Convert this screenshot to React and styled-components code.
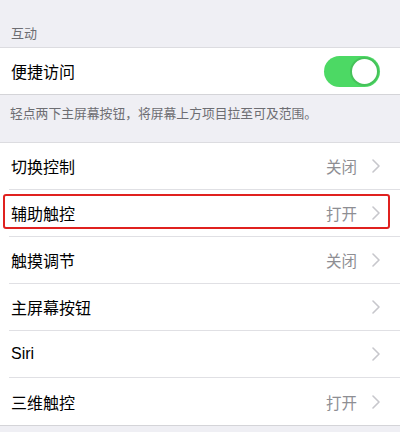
import React from 'react'
import styled, { createGlobalStyle } from 'styled-components'

const GlobalStyle = createGlobalStyle`
  body {
    margin: 0;
    background: #efeff4;
    font-family: "Noto Sans CJK SC", "Noto Sans", sans-serif;
  }
`

const Page = styled.div`
  width: 400px;
  height: 432px;
  overflow: hidden;
  background: #efeff4;
`

const GroupHeader = styled.div`
  height: 47px;
  box-sizing: border-box;
  padding: 0 0 5px 11px;
  display: flex;
  align-items: flex-end;
  font-size: 13px;
  color: #6d6d72;
`

const Group = styled.div`
  background: #fff;
  border-top: 1px solid #dcdce0;
  border-bottom: 1px solid #d4d4d8;
`

const Footer = styled.div`
  height: 47px;
  box-sizing: border-box;
  padding: 8px 0 0 10px;
  font-size: 12.8px;
  color: #6d6d72;
`

const Row = styled.div`
  position: relative;
  padding-left: 9px;
`

const RowInner = styled.div`
  height: ${p => p.$h || 46}px;
  box-sizing: border-box;
  display: flex;
  align-items: center;
  padding: 0 20px 0 2px;
  border-bottom: ${p => (p.$last ? 'none' : '1px solid #e0e0e4')};
`

const Label = styled.span`
  flex: 1;
  font-size: 16px;
  color: #000;
  font-family: ${p => (p.$latin ? '"Liberation Sans", Arial, sans-serif' : 'inherit')};
`

const Value = styled.span`
  font-size: 15.5px;
  color: #8e8e93;
  margin-right: 15px;
`

const Toggle = styled.div`
  width: 56px;
  height: 31px;
  border-radius: 16px;
  background: #4cd964;
  position: relative;
  &::after {
    content: '';
    position: absolute;
    top: 1px;
    right: 1px;
    width: 25px;
    height: 25px;
    border-radius: 50%;
    background: #fff;
    border: 2px solid #46c25a;
  }
`

const Highlight = styled.div`
  position: absolute;
  left: 3px;
  right: 10px;
  top: 4px;
  height: 35px;
  border: 2px solid #e0211f;
  border-radius: 3px;
  box-sizing: border-box;
  pointer-events: none;
`

const Chevron = () => (
  <svg width="8" height="14" viewBox="0 0 8 14">
    <polyline points="1,1 7,7 1,13" fill="none" stroke="#c7c7cc" strokeWidth="1.6" strokeLinecap="round" strokeLinejoin="round" />
  </svg>
)

const rows = [
  { label: '切换控制', value: '关闭' },
  { label: '辅助触控', value: '打开', marked: true },
  { label: '触摸调节', value: '关闭' },
  { label: '主屏幕按钮', value: '' },
  { label: 'Siri', value: '', latin: true },
  { label: '三维触控', value: '打开' },
]

export default function App() {
  return (
    <Page>
      <GlobalStyle />
      <GroupHeader>互动</GroupHeader>
      <Group>
        <Row>
          <RowInner $last>
            <Label>便捷访问</Label>
            <Toggle />
          </RowInner>
        </Row>
      </Group>
      <Footer>轻点两下主屏幕按钮，将屏幕上方项目拉至可及范围。</Footer>
      <Group>
        {rows.map((r, i) => (
          <Row key={r.label}>
            <RowInner $h={47} $last={i === rows.length - 1}>
              <Label $latin={r.latin}>{r.label}</Label>
              {r.value && <Value>{r.value}</Value>}
              <Chevron />
            </RowInner>
            {r.marked && <Highlight />}
          </Row>
        ))}
      </Group>
    </Page>
  )
}
